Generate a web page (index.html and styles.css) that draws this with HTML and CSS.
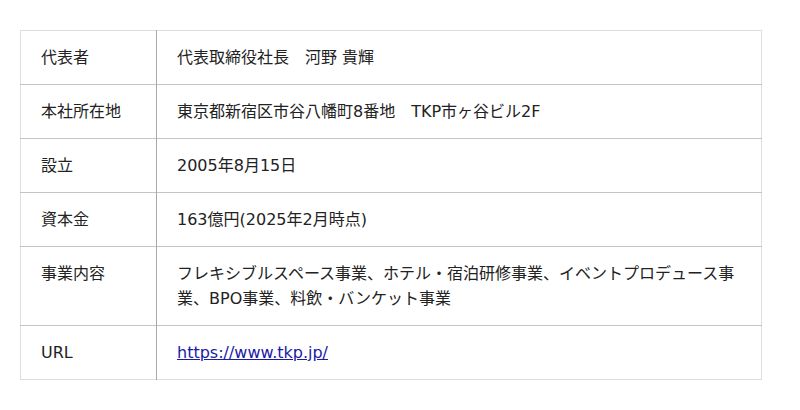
FILE: index.html
```html
<!DOCTYPE html>
<html lang="ja">
<head>
<meta charset="utf-8">
<link rel="stylesheet" href="styles.css">
</head>
<body>
<table class="info">
  <tr><th>代表者</th><td>代表取締役社長　河野 貴輝</td></tr>
  <tr><th>本社所在地</th><td>東京都新宿区市谷八幡町8番地　TKP市ヶ谷ビル2F</td></tr>
  <tr><th>設立</th><td>2005年8月15日</td></tr>
  <tr><th>資本金</th><td>163億円(2025年2月時点)</td></tr>
  <tr><th>事業内容</th><td>フレキシブルスペース事業、ホテル・宿泊研修事業、イベントプロデュース事業、BPO事業、料飲・バンケット事業</td></tr>
  <tr><th>URL</th><td><a class="link" href="https://www.tkp.jp/">https://www.tkp.jp/</a></td></tr>
</table>
</body>
</html>
```
FILE: styles.css
```css
html, body {
  margin: 0;
  padding: 0;
  background: #fff;
}
body {
  padding: 30px 20px;
  font-family: "DejaVu Sans", "Noto Sans CJK JP", sans-serif;
  font-size: 16px;
  color: #222;
}
.info {
  width: 742px;
  border-collapse: collapse;
  border: 1px solid #dedede;
  table-layout: fixed;
}
.info th, .info td {
  padding: 14px 20px;
  line-height: 25px;
  text-align: left;
  font-weight: normal;
  vertical-align: top;
  border-top: 1px solid #c4c4c4;
}
.info tr:first-child th, .info tr:first-child td {
  border-top: 1px solid #dedede;
}
.info th {
  width: 95px;
  border-right: 1px solid #a8a8a8;
}
.link {
  color: #1a1aa6;
  text-decoration: underline;
}
```
